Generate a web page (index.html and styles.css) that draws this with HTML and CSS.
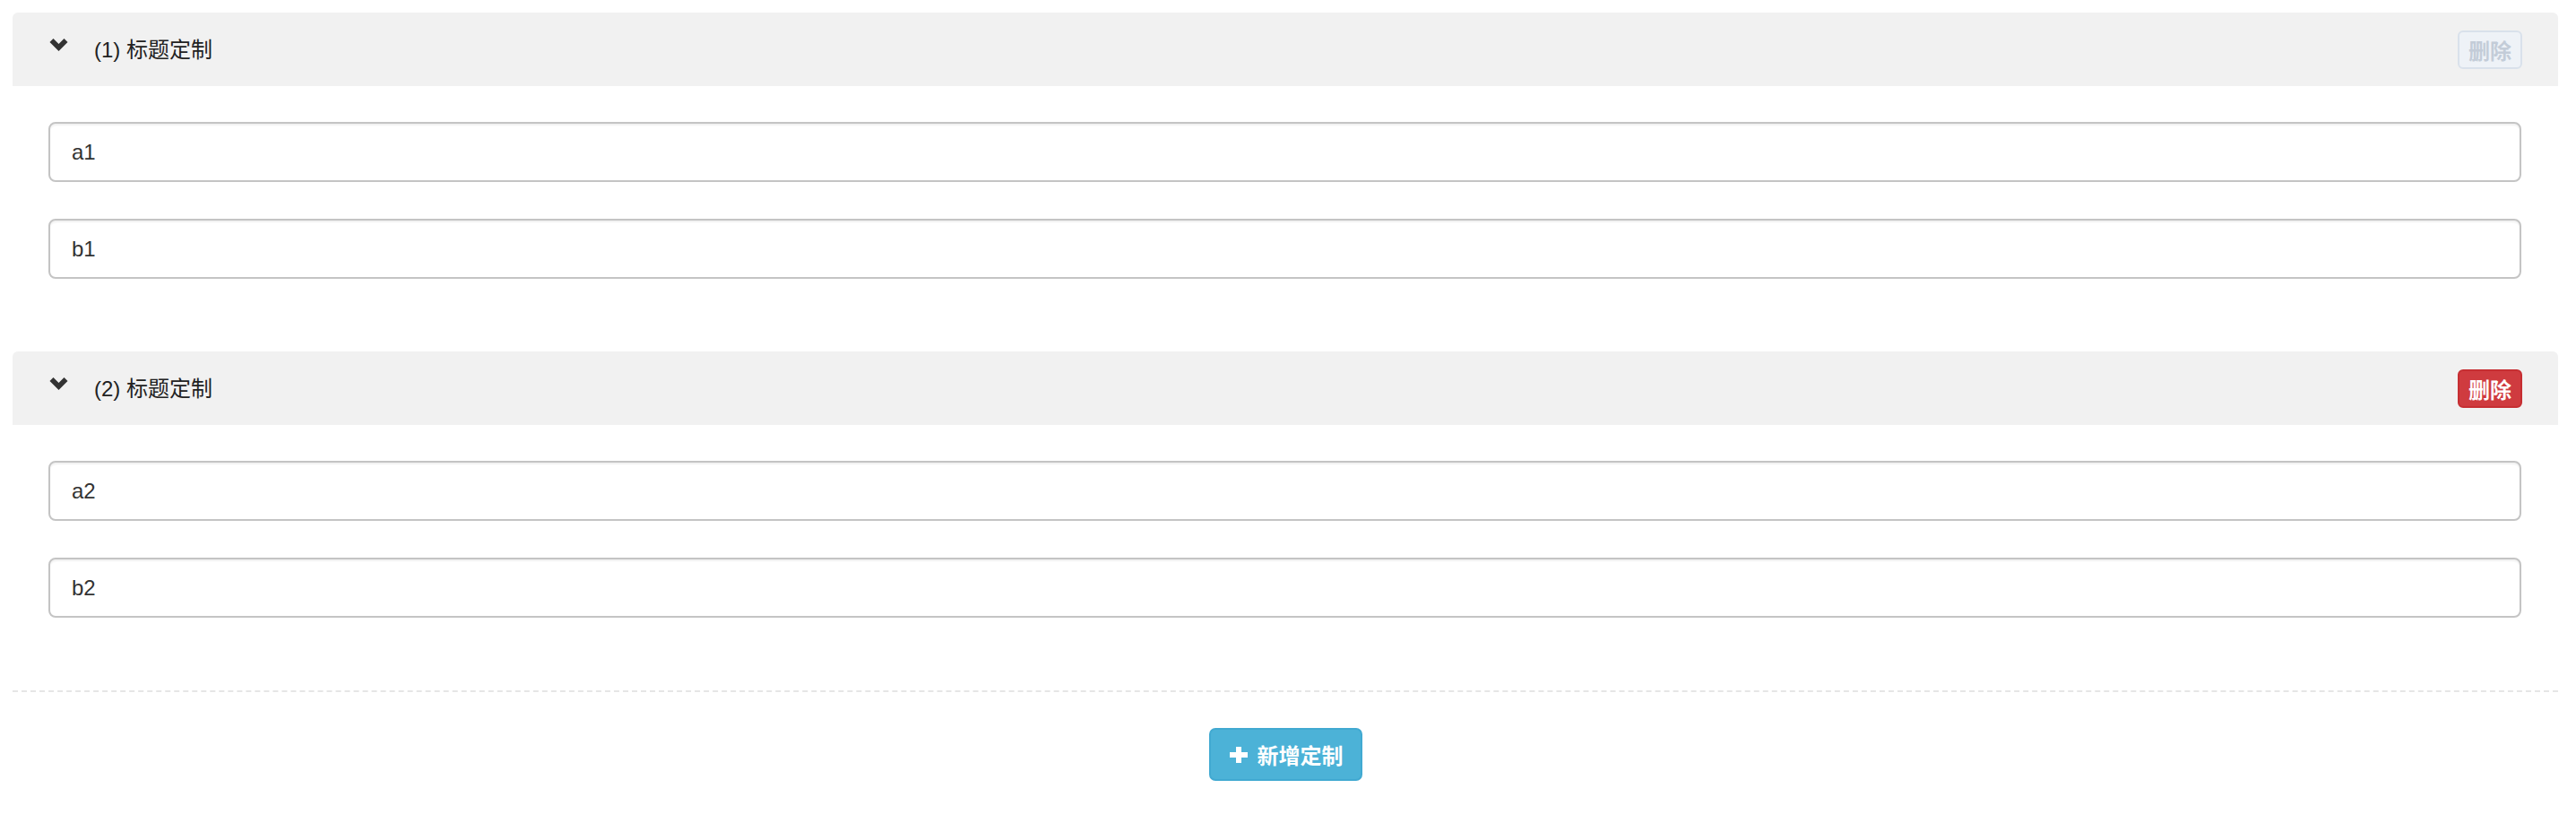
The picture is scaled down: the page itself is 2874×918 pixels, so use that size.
FILE: index.html
```html
<!DOCTYPE html>
<html lang="zh-CN">
<head>
<meta charset="utf-8">
<title>标题定制</title>
<link rel="stylesheet" href="styles.css">
</head>
<body>
<div class="page">
  <div class="section">
    <div class="section-head">
      <svg class="chevron" viewBox="0 0 20 14" width="21" height="14"><polygon points="0,4 4,0 10,6 16,0 20,4 10,14" fill="#333"/></svg>
      <span class="title">(1) 标题定制</span>
      <button class="btn-del btn-del-disabled" disabled>删除</button>
    </div>
    <div class="section-body">
      <input class="field" type="text" value="a1">
      <input class="field" type="text" value="b1">
    </div>
  </div>
  <div class="section">
    <div class="section-head">
      <svg class="chevron" viewBox="0 0 20 14" width="21" height="14"><polygon points="0,4 4,0 10,6 16,0 20,4 10,14" fill="#333"/></svg>
      <span class="title">(2) 标题定制</span>
      <button class="btn-del btn-del-active">删除</button>
    </div>
    <div class="section-body">
      <input class="field" type="text" value="a2">
      <input class="field" type="text" value="b2">
    </div>
  </div>
  <div class="footer">
    <button class="btn-add">
      <svg class="plus" viewBox="0 0 20 18" width="20" height="18"><path d="M7 0h6v6h7v6h-7v6h-6v-6h-7v-6h7z" fill="#fff"/></svg>
      <span>新增定制</span>
    </button>
  </div>
</div>
</body>
</html>
```
FILE: styles.css
```css
html, body {
  margin: 0;
  padding: 0;
  background: #fff;
}
body {
  font-family: "Liberation Sans", Arial, "Noto Sans CJK SC", sans-serif;
  color: #333;
}
.page {
  padding: 14px 20px 0 14px;
}
.section-head {
  height: 82px;
  background: #f1f1f1;
  border-radius: 6px 6px 0 0;
  display: flex;
  align-items: center;
  padding: 0 40px 0 41px;
}
.chevron {
  display: block;
  margin-top: -10px;
}
.title {
  margin-left: 29px;
  padding-bottom: 4px;
  font-size: 24px;
  color: #222;
  flex: 1;
}
.btn-del {
  width: 72px;
  height: 43px;
  border-radius: 6px;
  font-family: "Liberation Sans", "Noto Sans CJK SC", sans-serif;
  font-size: 24px;
  font-weight: 700;
  padding: 0;
  display: flex;
  align-items: center;
  justify-content: center;
}
.btn-del-disabled {
  background: #eef2f7;
  border: 2px solid #d9e1eb;
  color: #c3ccd8;
}
.btn-del-active {
  background: #cf3b3f;
  border: 2px solid #c62e32;
  color: #fff;
}
.section-body {
  padding: 40px 41px 81px 40px;
  display: flex;
  flex-direction: column;
  gap: 41px;
}
.field {
  display: block;
  box-sizing: border-box;
  width: 100%;
  height: 67px;
  margin: 0;
  padding: 0 24px;
  border: 2px solid #c4c4c4;
  border-radius: 8px;
  box-shadow: inset 0 2px 2px rgba(0, 0, 0, 0.06);
  font-family: "Liberation Sans", Arial, sans-serif;
  font-size: 24px;
  color: #333;
  background: #fff;
  outline: none;
}
.footer {
  border-top: 2px dashed #e6e6e6;
  padding-top: 40px;
  height: 106px;
  display: flex;
  justify-content: center;
  align-items: flex-start;
}
.btn-add {
  box-sizing: border-box;
  width: 171px;
  height: 59px;
  background: #4cb2d7;
  border: 2px solid #41a9d1;
  border-radius: 7px;
  color: #fff;
  display: flex;
  align-items: center;
  padding: 0 0 0 21px;
  font-family: "Liberation Sans", "Noto Sans CJK SC", sans-serif;
  font-size: 24px;
  font-weight: 700;
}
.plus {
  display: block;
  margin-right: 11px;
}
```
